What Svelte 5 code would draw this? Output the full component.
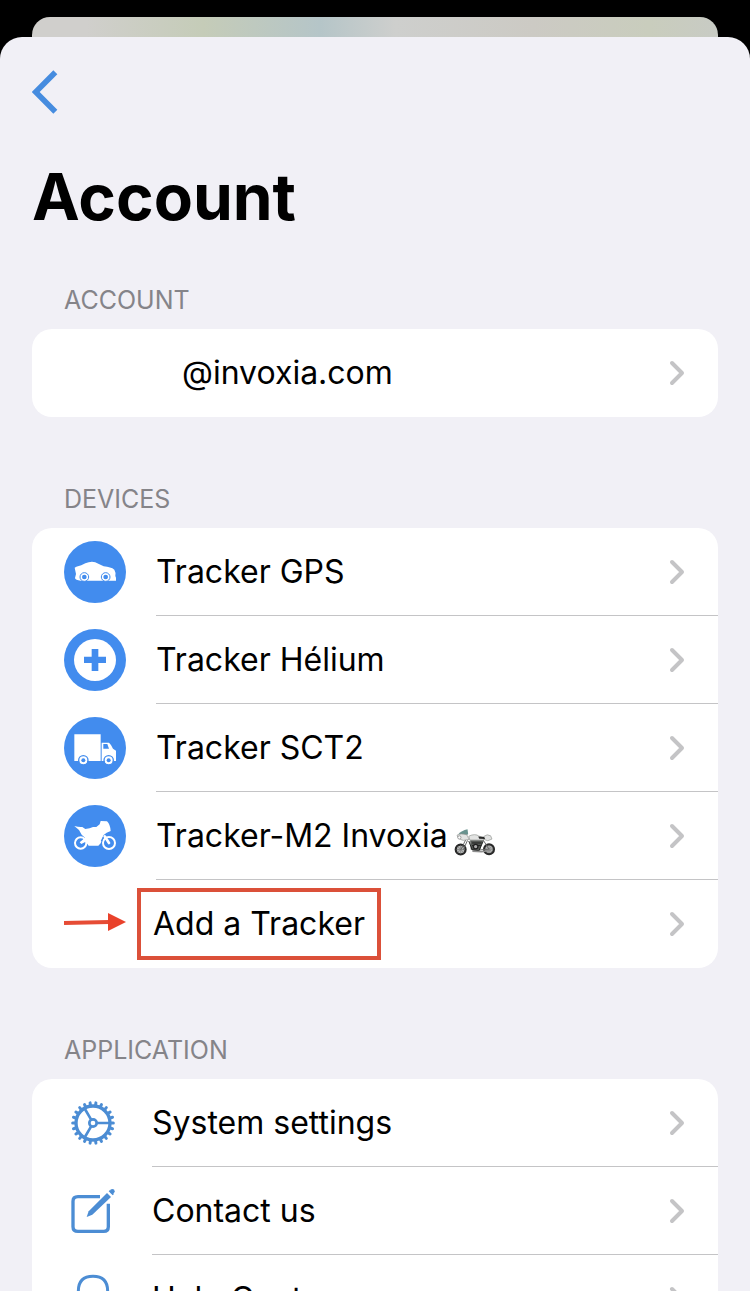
<script>
	const devices = [
		{ name: 'Tracker GPS', icon: 'car' },
		{ name: 'Tracker Hélium', icon: 'plus' },
		{ name: 'Tracker SCT2', icon: 'truck' },
		{ name: 'Tracker-M2 Invoxia', icon: 'moto', bike: true }
	];

	const application = [
		{ name: 'System settings', icon: 'gear' },
		{ name: 'Contact us', icon: 'compose' },
		{ name: 'Help Center', icon: 'help' }
	];

	const teeth = Array.from({ length: 22 }, (_, i) => (i * 360) / 22);
</script>

{#snippet chevron()}
	<svg class="chevron" viewBox="0 0 16 26" aria-hidden="true">
		<path d="M3 3 13 13 3 23" />
	</svg>
{/snippet}

{#snippet deviceIcon(kind)}
	<svg class="device-icon" viewBox="27 27 186 186" aria-hidden="true">
		<circle cx="120" cy="120" r="93" fill="#428cee" />
		{#if kind === 'car'}
			<path fill="#fff" d="M59 107 64 104Q80 101 91 94Q113 84 130 95L146 103Q168 105 178 113Q183 121 181 132L183 137V146H77Q61 145 60 138L63 126Z" />
			{#each [88, 152] as cx}
				<circle {cx} cy="135" r="13" fill="#fff" stroke="#428cee" stroke-width="3" />
				<circle {cx} cy="135" r="7" fill="#428cee" />
			{/each}
		{:else if kind === 'plus'}
			<circle cx="120" cy="120" r="63" fill="#fff" />
			<path fill="#428cee" d="M110 87h20v23h23v19h-23v24h-20v-24H87v-19h23z" />
		{:else if kind === 'truck'}
			<path fill="#fff" d="M58 79h79v80H58zM140 104h22q8 7 12 18l9 6v31h-43z" />
			<path fill="#428cee" d="M145 108h12l5 14h-17z" />
			{#each [85, 161] as cx}
				<circle {cx} cy="157" r="14" fill="#fff" stroke="#428cee" stroke-width="4" />
				<circle {cx} cy="157" r="6" fill="#428cee" />
			{/each}
		{:else}
			<g fill="none" stroke="#fff" stroke-width="6">
				<circle cx="77" cy="141" r="17" />
				<circle cx="162" cy="141" r="18" />
			</g>
			<path fill="#fff" d="M58 90Q72 94 82 93L91 99Q105 98 114 93L124 93 134 85 137 75 156 76Q166 86 167 105L155 110 146 117 137 142 130 149H101L92 137 79 144 74 139 90 125 80 116 72 102Z" />
			<path fill="none" stroke="#428cee" stroke-width="4" d="M147 119 139 136" />
			<path fill="none" stroke="#fff" stroke-width="8" stroke-linecap="round" d="M149 121 162 141" />
		{/if}
	</svg>
{/snippet}

{#snippet appIcon(kind)}
	{#if kind === 'gear'}
		<svg class="app-icon" viewBox="27 -33 174 264" aria-hidden="true">
			<circle cx="114" cy="99" r="51" stroke-width="10" />
			<circle cx="114" cy="99" r="11" stroke-width="8" />
			<path stroke-width="8" d="M126 99H164M108 88 88 54M108 110 88 144" />
			{#each teeth as angle}
				<path stroke-width="9" stroke-linecap="round" d="M166 99H175" transform="rotate({angle} 114 99)" />
			{/each}
		</svg>
	{:else if kind === 'compose'}
		<svg class="app-icon" viewBox="27 231 174 264" aria-hidden="true">
			<path stroke-width="10" d="M135 320H69Q54 320 54 334V410Q54 424 69 424H146Q160 424 160 410V341" />
			<path class="solid" d="M95 381 101 364 156 309 168 321 112 374Z" />
			<circle class="solid" cx="172" cy="304" r="7" />
			<path class="solid" d="M161 304 165 300 177 312 173 316Z" />
		</svg>
	{:else}
		<svg class="app-icon" viewBox="27 495 174 264" aria-hidden="true">
			<path stroke-width="9" d="M70 612V604Q70 559 114 559Q158 559 158 604V612" />
			<path stroke-width="9" d="M70 612q-14 2-14 18t14 18zM158 612q14 2 14 18t-14 18zM158 648q-6 24-36 24" />
		</svg>
	{/if}
{/snippet}

{#snippet bikeEmoji()}
	<svg class="bike" viewBox="48 50 128 92" role="img" aria-label="motorcycle">
		<g fill="#b4b6b5" stroke="#292929" stroke-width="7">
			<circle cx="68" cy="119" r="15" />
			<circle cx="155" cy="118" r="15" />
		</g>
		<g stroke="#777" stroke-width="2">
			<path d="M55 119H81M68 106V132M59 110 77 128M59 128 77 110M142 118H168M155 105V131M146 109 164 127M146 127 164 109" />
		</g>
		<path d="M69 119 84 88M76 120 89 91M119 121 155 118 137 90" fill="none" stroke="#666" stroke-width="3" />
		<path d="M97 91H137L128 119 116 127 99 119Z" fill="#555855" />
		<path d="M93 93 103 119 124 123 137 94M103 99H132M103 107H130" fill="none" stroke="#202220" stroke-width="3" />
		<circle cx="114" cy="110" r="7" fill="#aaa" stroke="#202020" stroke-width="4" />
		<path d="M104 124 132 126 160 121" fill="none" stroke="#8e8e8e" stroke-width="5" />
		<path d="M61 72Q70 61 89 57L91 72 78 79Z" fill="#68928e" />
		<path d="M57 75Q67 68 87 74L94 88 76 91Q59 87 57 75ZM93 78Q113 69 124 78L139 82 139 90 96 90ZM139 79Q149 70 160 77L164 87 151 92 139 88Z" fill="#e2e3e2" stroke="#909390" stroke-width="2" />
		<path d="M122 79 140 81 143 87 125 86Z" fill="#292929" />
		<circle cx="64" cy="82" r="5" fill="#fff" stroke="#777" stroke-width="2" />
	</svg>
{/snippet}

<div class="screen">
	<div class="previous-sheet"></div>
	<main class="sheet">
		<button type="button" class="back" aria-label="Back">
			<svg viewBox="96 210 78 132" aria-hidden="true">
				<path d="M166 217 107 276 166 335" />
			</svg>
		</button>
		<h1>Account</h1>

		<section>
			<h2>ACCOUNT</h2>
			<div class="card">
				<a href="#account" class="row">
					<span class="body email"><span>@invoxia.com</span>{@render chevron()}</span>
				</a>
			</div>
		</section>

		<section>
			<h2>DEVICES</h2>
			<div class="card">
				{#each devices as device}
					<a href="#{device.icon}" class="row">
						{@render deviceIcon(device.icon)}
						<span class="body">
							<span class="name">{device.name}{#if device.bike}{@render bikeEmoji()}{/if}</span>
							{@render chevron()}
						</span>
					</a>
				{/each}
				<a href="#add" class="row">
					<svg class="arrow" viewBox="0 0 62 24" aria-hidden="true">
						<path d="M0 11 45 10" />
						<polygon points="44,1 62,10 44,19" />
					</svg>
					<span class="body add">
						<span class="highlight">Add a Tracker</span>
						{@render chevron()}
					</span>
				</a>
			</div>
		</section>

		<section>
			<h2>APPLICATION</h2>
			<div class="card">
				{#each application as item}
					<a href="#{item.icon}" class="row">
						{@render appIcon(item.icon)}
						<span class="body"><span>{item.name}</span>{@render chevron()}</span>
					</a>
				{/each}
			</div>
		</section>
	</main>
</div>

<style>
	:global(body) { background: #000; }
	.screen {
		display: flex; flex-direction: column; height: 100vh; overflow: hidden;
		box-sizing: border-box; padding-top: 17px;
		font-family: Inter, "Liberation Sans", sans-serif; color: #000;
	}
	.previous-sheet {
		flex: none; height: 20px; margin: 0 32px; border-radius: 18px 18px 0 0;
		background: linear-gradient(90deg, #d0cfcc 8%, #c5ccb8 25%, #b5c5c8 42%, #cecfcd 53%, #cccac4 73%, #c9cdbd 90%, #c8cbc4);
	}
	.sheet {
		flex: 1 0 auto; padding: 33px 32px 0;
		border-radius: 22px 22px 0 0; background: #f1f0f6;
	}
	.back { display: block; padding: 0; border: none; background: none; cursor: pointer; }
	.back svg { display: block; width: 26px; height: 44px; }
	.back path { fill: none; stroke: #468cdf; stroke-width: 17; }
	h1 { margin: 43px 0 47px; font-size: 64px; line-height: 80px; font-weight: 700; }
	section { margin-bottom: 66px; }
	h2 {
		margin: 0 0 13px; padding-left: 32px;
		font-size: 25px; line-height: 32px; font-weight: 400; color: #858489;
	}
	.card { border-radius: 20px; background: #fff; overflow: hidden; }
	.row {
		display: flex; align-items: center; height: 88px; padding-left: 32px;
		font-size: 32px; color: inherit; text-decoration: none;
	}
	.body {
		display: flex; flex: 1; align-items: center; justify-content: space-between;
		box-sizing: border-box; height: 100%; margin-left: 30px; padding-right: 33px;
		border-bottom: 1px solid #c4c4c6;
	}
	.row:last-child .body { border-bottom-color: transparent; }
	.email { margin-left: 118px; }
	.add { margin-left: 11px; }
	.name { display: flex; align-items: center; gap: 6px; }
	.highlight { padding: 12px; border: 4px solid #db5039; line-height: 40px; }
	.chevron { flex: none; width: 16px; height: 26px; }
	.chevron path { fill: none; stroke: #c4c4c6; stroke-width: 4; stroke-linecap: round; stroke-linejoin: round; }
	.device-icon { flex: none; width: 62px; height: 62px; }
	.app-icon { flex: none; width: 58px; height: 88px; fill: none; stroke: #4c8dd4; }
	.app-icon .solid { fill: #4c8dd4; stroke: none; }
	.bike { width: 42px; height: 30px; margin-top: 12px; }
	.arrow { flex: none; width: 62px; height: 24px; }
	.arrow path { stroke: #e64c35; stroke-width: 4; }
	.arrow polygon { fill: #e9422b; }
</style>
